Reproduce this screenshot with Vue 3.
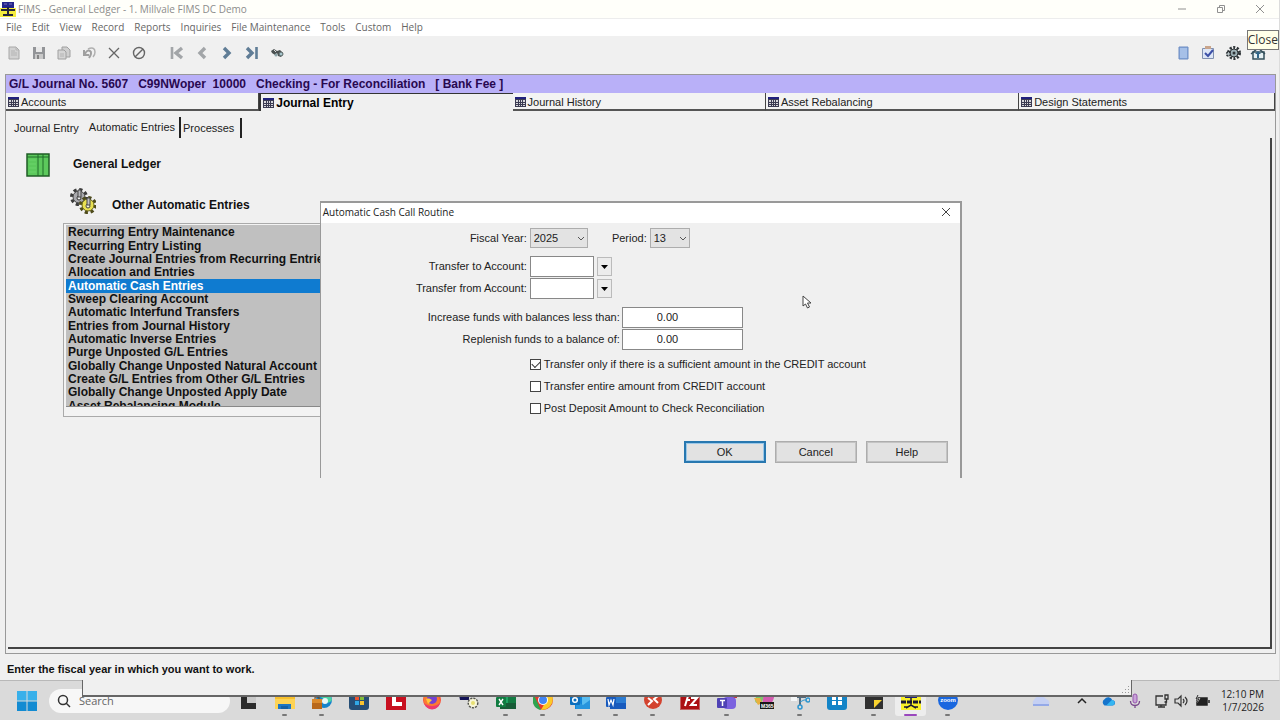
<script setup>
import { ref } from 'vue'

const menus = ['File', 'Edit', 'View', 'Record', 'Reports', 'Inquiries', 'File Maintenance', 'Tools', 'Custom', 'Help']

const leftTools = [
  { name: 'New', art: '<path d="M3 2h7l3 3v9H3z" fill="#d2d2d2" stroke="#a8a8a8"/><path d="M10 2v3h3M5 6h4M5 8h6M5 10h6" fill="none" stroke="#b4b4b4"/>' },
  { name: 'Save', art: '<path d="M2 2h12v12H2z" fill="#939598"/><path d="M5 2h6v5H5z" fill="#e9e9e9"/><path d="M4 9h8v5H4z" fill="#c9c9c9"/><path d="M6 10h2v4H6z" fill="#858585"/>' },
  { name: 'Copy', art: '<path d="M6 2h5l3 3v7H6z" fill="#cfcfcf" stroke="#a0a0a0"/><path d="M2 5h6l2 2v7H2z" fill="#d5d5d5" stroke="#a0a0a0"/><path d="M4 9h4M4 11h4" stroke="#b4b4b4"/>' },
  { name: 'Undo', art: '<path d="M3 5v5h5M4 9c1-3 3-4 5-3s1 4-1 7" fill="none" stroke="#a0a0a0" stroke-width="2"/><path d="M7 4c4-2 7-1 7 3 0 2-1 4-2 5" fill="none" stroke="#b0b0b0" stroke-width="1.500"/>' },
  { name: 'Delete', art: '<path d="M3 3l10 10M13 3L3 13" fill="none" stroke="#666" stroke-width="1.3"/>' },
  { name: 'Cancel record', art: '<circle cx="8" cy="8" r="5.500" fill="none" stroke="#666" stroke-width="1.4"/><path d="M4 12l8-8" stroke="#666" stroke-width="1.4"/>' }
]
const navTools = [
  { name: 'First', art: '<path d="M3 2v12" stroke="#a2a5a8" stroke-width="2.6"/><path d="M13 3L7 8l6 5" fill="none" stroke="#a2a5a8" stroke-width="3.4"/>' },
  { name: 'Previous', art: '<path d="M11 3L6 8l5 5" fill="none" stroke="#a2a5a8" stroke-width="3.4"/>' },
  { name: 'Next', art: '<path d="M5 3l5 5-5 5" fill="none" stroke="#607d96" stroke-width="3.4"/>' },
  { name: 'Last', art: '<path d="M3 3l5 5-5 5" fill="none" stroke="#607d96" stroke-width="3.4"/><path d="M12.500 2v12" stroke="#607d96" stroke-width="2.6"/>' },
  { name: 'Find', art: '<path d="M2 6l3-2 3 2 3-1 3 3-2 4-3-1-1-3-2 2-3-2z" fill="#4b5151"/><circle cx="12" cy="9" r="2" fill="#a7c6cd" stroke="#596565"/><circle cx="7" cy="10" r="1.5" fill="#8da5aa"/><path d="M5 5l2 2" stroke="#ddd"/>' }
]
const rightTools = [
  { name: 'Calculator', art: '<path d="M4 2h9v12H4z" fill="#88a9dc" stroke="#6d8cc2"/><path d="M5 4h7M5 6h7M5 8h7M5 10h7M5 12h7" stroke="#c4d7f3"/>' },
  { name: 'Tasks', art: '<path d="M2.500 3.500h11v10h-11z" fill="#dde6f7" stroke="#8090b0"/><path d="M5 1h6v3H5z" fill="#c9a58c"/><path d="M5 8l3 3 5-6" fill="none" stroke="#3c50a8" stroke-width="2"/>' },
  { name: 'Settings', art: '<circle cx="9" cy="8" r="5.500" fill="none" stroke="#2e3437" stroke-width="3" stroke-dasharray="2 1.500"/><circle cx="9" cy="8" r="4" fill="#9db0b5" stroke="#2e3437"/><circle cx="9" cy="8" r="1.500" fill="#2e3437"/><circle cx="3.500" cy="9" r="2" fill="#b7c3c6" stroke="#2e3437" stroke-width="1.500" stroke-dasharray="2 1"/>' },
  { name: 'Home', art: '<path d="M3 7h11v7H3z" fill="#e5f0f3" stroke="#34505c" stroke-width="1.5"/><path d="M1 9l7-6 7 6" fill="none" stroke="#34505c" stroke-width="1.5"/><path d="M8 6l3 3H9v4H7V9H5z" fill="#31678a"/>' }
]

const record = 'G/L Journal No. 5607   C99NWoper  10000   Checking - For Reconciliation   [ Bank Fee ]'
const tabs = ['Accounts', 'Journal Entry', 'Journal History', 'Asset Rebalancing', 'Design Statements']
const subTabs = ['Journal Entry', 'Automatic Entries', 'Processes']
const routines = [
  'Recurring Entry Maintenance',
  'Recurring Entry Listing',
  'Create Journal Entries from Recurring Entries',
  'Allocation and Entries',
  'Automatic Cash Entries',
  'Sweep Clearing Account',
  'Automatic Interfund Transfers',
  'Entries from Journal History',
  'Automatic Inverse Entries',
  'Purge Unposted G/L Entries',
  'Globally Change Unposted Natural Account',
  'Create G/L Entries from Other G/L Entries',
  'Globally Change Unposted Apply Date',
  'Asset Rebalancing Module'
]
const activeTab = ref('Journal Entry')
const activeRoutine = ref('Automatic Cash Entries')

const fiscalYear = ref('2025')
const period = ref('13')
const toAccount = ref('')
const fromAccount = ref('')
const lessThan = ref('0.00')
const balanceOf = ref('0.00')
const options = ref([
  { id: 'credit-only', label: 'Transfer only if there is a sufficient amount in the CREDIT account', on: true },
  { id: 'entire', label: 'Transfer entire amount from CREDIT account', on: false },
  { id: 'deposit', label: 'Post Deposit Amount to Check Reconciliation', on: false }
])

const apps = [
  { name: 'Task view', art: '<path d="M3 4h6v9h9v6H3z" fill="#2b2b2b"/><path d="M9 3h9v10H9z" fill="#c9c9c9"/>' },
  { name: 'File Explorer', run: true, art: '<path d="M0 2h8l2 2h10v15H0z" fill="#f7c02c"/><path d="M0 9h20v10H0z" fill="#fdd355"/><path d="M3 14h13v5H3z" fill="#1c76c4"/><path d="M6 16h7v3H6z" fill="#1460a4"/>' },
  { name: 'Edge Work', run: true, art: '<circle cx="12" cy="10" r="8" fill="#1583cc"/><path d="M5 5a9 9 0 0 1 15 5c-3 4-7 3-8-1z" fill="#49d3a3"/><circle cx="13" cy="11" r="3" fill="#e9f6f7"/><path d="M0 9h10v10H0z" fill="#b8681b"/><path d="M0 9h10v4H0z" fill="#db8a2b"/><path d="M3 9V7h4v2" fill="none" stroke="#724015"/>' },
  { name: 'Microsoft Store', art: '<rect width="20" height="20" rx="3" fill="#264e76"/><path d="M6 6h4v4H6z" fill="#ee5430"/><path d="M11 6h4v4h-4z" fill="#84be3b"/><path d="M6 11h4v4H6z" fill="#31a7e5"/><path d="M11 11h4v4h-4z" fill="#f9c22e"/>' },
  { name: 'Lexis', art: '<path d="M0 0h20v20H0z" fill="#c81020"/><path d="M6 3h4v9h6v4H6z" fill="#fff"/>' },
  { name: 'Firefox', art: '<circle cx="10" cy="10" r="9" fill="#f9543b"/><path d="M2 5c3 4 3-2 9 0 4 0 7 2 7 7-3 9-16 8-16-1z" fill="#fb7b32"/><circle cx="10" cy="9" r="5" fill="#7541d3"/><path d="M4 9c3-1 4 0 6 1l-4 4z" fill="#ffc739"/><path d="M2 13c4 4 12 4 16 0-2 8-13 9-16 0z" fill="#ed3a6f"/>' },
  { name: 'FIMS Tools', art: '<path d="M0 5h6l4 2v3H1z" fill="#141457"/><circle cx="14" cy="13" r="4.500" fill="#f8f6d9" stroke="#55564f" stroke-width="2" stroke-dasharray="2 1"/><circle cx="14" cy="13" r="4" fill="#f8f6d9"/><circle cx="14" cy="13" r="2" fill="#e8df72"/>' },
  { name: 'Excel', run: true, art: '<rect x="4" y="1" width="16" height="18" rx="1" fill="#20a464"/><path d="M12 7h8v6h-8z" fill="#137b42"/><path d="M4 13h16v6H4z" fill="#185c37"/><rect y="7" width="10" height="10" rx="1" fill="#107c41"/><path d="M3 9l4 6M7 9l-4 6" stroke="#fff" stroke-width="1.4"/>' },
  { name: 'Chrome', run: true, art: '<circle cx="10" cy="10" r="10" fill="#e33b2e"/><path d="M1 5l7 15C0 19-2 10 1 5z" fill="#2ea44f"/><path d="M19 5c3 8-3 15-11 15l5-9-1-6z" fill="#fbc927"/><circle cx="10" cy="10" r="5" fill="#fff"/><circle cx="10" cy="10" r="4" fill="#4285f4"/>' },
  { name: 'Outlook', run: true, art: '<path d="M5 1h14v18H5z" fill="#1285d8"/><path d="M12 6h8v12h-8z" fill="#59bdf0"/><path d="M6 11l7 4 7-5v9H6z" fill="#2795dd"/><rect y="5" width="10" height="10" rx="1" fill="#0d6fbd"/><circle cx="5" cy="10" r="2.3" fill="none" stroke="#fff" stroke-width="1.5"/>' },
  { name: 'Word', run: true, art: '<rect x="4" y="1" width="16" height="18" rx="1" fill="#41a5ee"/><path d="M4 7h16v6H4z" fill="#2b7cd3"/><path d="M4 13h16v6H4z" fill="#185abd"/><rect y="7" width="10" height="10" rx="1" fill="#185abd"/><path d="M2 9l1 6 2-5 2 5 1-6" fill="none" stroke="#fff" stroke-width="1.2"/>' },
  { name: 'Remote Desktop', run: true, art: '<circle cx="10" cy="10" r="9" fill="#d3432f"/><path d="M5 8l4 3-4 4M15 6l-4 3 4 4" fill="none" stroke="#fff" stroke-width="2"/>' },
  { name: 'FileZilla', art: '<path d="M0 0h20v20H0z" fill="#ac1014"/><path d="M5 16L8 6h5M6 10h4M11 8h6l-6 7h6" fill="none" stroke="#fff" stroke-width="2"/><path d="M.5.5h19v19H.5z" fill="none" stroke="#d9b4b4" stroke-dasharray="1 1"/>' },
  { name: 'Teams', run: true, art: '<circle cx="14" cy="4" r="4" fill="#5059c9"/><path d="M13 5h7v3h-5z" fill="#c73639"/><rect x="6" y="7" width="13" height="12" rx="4" fill="#7b62df"/><rect x="0" y="8" width="10" height="10" rx="1" fill="#4f42b5"/><path d="M3 10.500h5M5.500 10v6" stroke="#fff" stroke-width="1.5"/>' },
  { name: 'Copilot M365', art: '<path d="M1 10C4-2 9 0 12 2l-4 10c-3 2-7 2-7-2z" fill="#7dc86b"/><path d="M10 3h10c1 5-2 12-7 12H8z" fill="#d35bb0"/><path d="M0 8h6l2 5-4 2z" fill="#e8b13f"/><path d="M6 12h14v7H6z" fill="#171717"/><text x="7" y="17.500" font-size="5" font-weight="bold" fill="#fff">M365</text>' },
  { name: 'Snipping Tool', run: true, art: '<path d="M1 7h15M10 2v13" stroke="#546d80" stroke-width="2"/><path d="M1 7h6v4H1z" fill="#f4f6f7"/><circle cx="18" cy="10" r="2" fill="none" stroke="#2f96cf" stroke-width="1.5"/><circle cx="10" cy="17" r="2" fill="none" stroke="#2f96cf" stroke-width="1.5"/><path d="M10 12l4-2h3" fill="none" stroke="#2f96cf"/>' },
  { name: 'Microsoft Windows App', art: '<rect width="20" height="20" rx="3" fill="#1384c7"/><path d="M5 6h4v4H5zM11 6h4v4h-4zM5 11h4v4H5zM11 11h4v4h-4z" fill="#fff"/>' },
  { name: 'Sticky Notes', run: true, art: '<path d="M1 1h18v18H1z" fill="#303030"/><path d="M10 18v-8h8z" fill="#f9d32e"/>' },
  { name: 'FIMS', run: true, on: true, art: '<path d="M0 1h20v19H0z" fill="#f8ef28"/><path d="M4 3h12v5H4z" fill="#1d207a"/><path d="M0 12h20" stroke="#171733" stroke-width="3" stroke-dasharray="5 1"/><path d="M10 8v8M3 17h4M13 17h4M5 18l5-3 5 3" fill="none" stroke="#171733" stroke-width="1.500"/>' },
  { name: 'Zoom', run: true, art: '<circle cx="10" cy="10" r="10" fill="#1967df"/><text x="10" y="12" text-anchor="middle" font-size="6" font-weight="bold" fill="#fff">zoom</text>' }
]
</script>

<template>
  <div class="desktop">
    <div class="window">
      <header class="titlebar">
        <svg class="logo" viewBox="0 0 16 16" aria-hidden="true">
          <path d="M0 7h16v9H0z" fill="#f4ec3e" /><path d="M2 1h12v6H2z" fill="#23238c" />
          <path d="M1 9h14" stroke="#24243c" stroke-width="2" stroke-dasharray="6 2" />
          <path d="M8 6v7M3 14h10" stroke="#24243c" stroke-width="2" /><path d="M4 3h3M9 3h3" stroke="#7f75b8" />
        </svg>
        <span class="title">FIMS - General Ledger - 1. Millvale FIMS DC Demo</span>
        <button class="caption-btn" aria-label="Minimize"><svg viewBox="0 0 10 10"><path d="M1 5h8" /></svg></button>
        <button class="caption-btn" aria-label="Restore"><svg viewBox="0 0 10 10"><path d="M1.500 3.500h5v5h-5zM3.500 3V1.500h5v5H7" /></svg></button>
        <button class="caption-btn" aria-label="Close window"><svg viewBox="0 0 10 10"><path d="M1 1l8 8M9 1L1 9" /></svg></button>
      </header>

      <nav class="menubar">
        <button v-for="m in menus" :key="m">{{ m }}</button>
      </nav>

      <div class="toolbar">
        <div class="tools">
          <button v-for="t in leftTools" :key="t.name" :aria-label="t.name"><svg viewBox="0 0 16 16" v-html="t.art" /></button>
        </div>
        <div class="tools">
          <button v-for="t in navTools" :key="t.name" :aria-label="t.name"><svg viewBox="0 0 16 16" v-html="t.art" /></button>
        </div>
        <div class="tools far">
          <button v-for="t in rightTools" :key="t.name" :aria-label="t.name"><svg viewBox="0 0 16 16" v-html="t.art" /></button>
        </div>
        <span class="tooltip">Close</span>
      </div>

      <main class="frame">
        <h1 class="record">{{ record }}</h1>
        <div class="tabs">
          <button v-for="t in tabs" :key="t" class="tab" :class="{ active: t === activeTab }" @click="activeTab = t">
            <svg viewBox="0 0 11 10" aria-hidden="true">
              <path d="M0 0h11v10H0z" fill="#3b3b52" /><path d="M0 0h11v2H0z" fill="#20207c" />
              <path d="M1 3h2v2H1zM4 3h1v2H4zM6 3h1v2H6zM8 3h2v2H8zM1 6h2v1H1zM4 6h1v1H4zM6 6h1v1H6zM8 6h2v1H8zM1 8h2v1H1zM4 8h1v1H4zM6 8h1v1H6zM8 8h2v1H8z" fill="#d8d8dc" />
            </svg>
            {{ t }}
          </button>
        </div>
        <div class="subtabs">
          <button v-for="(t, i) in subTabs" :key="t" :class="{ current: i === 1 }">{{ t }}</button>
        </div>

        <section class="panel">
          <div class="heading">
            <svg class="book" viewBox="0 0 24 24" aria-hidden="true">
              <path d="M1 1h22v22H1z" fill="#5cc95c" stroke="#1f5c26" stroke-width="1.500" />
              <path d="M1 4h22M12 1v22M17 1v22" stroke="#1f6c28" fill="none" />
              <path d="M3 7h7M3 11h7M3 15h7M3 19h7" stroke="#6ad46a" />
            </svg>
            <h2>General Ledger</h2>
          </div>
          <div class="heading nested">
            <svg class="gears" viewBox="0 0 26 26" aria-hidden="true">
              <circle cx="9" cy="9" r="7" fill="none" stroke="#3c3c3c" stroke-width="4" stroke-dasharray="3 2.500" />
              <circle cx="9" cy="9" r="6" fill="#a9a9ad" stroke="#4a4a4a" /><circle cx="9" cy="10" r="2" fill="#eee" stroke="#333" /><path d="M8 2h3v7H8z" fill="#b9b9bd" stroke="#444" />
              <circle cx="18" cy="17" r="7" fill="none" stroke="#4e4b1b" stroke-width="4" stroke-dasharray="3 2.500" />
              <circle cx="18" cy="17" r="6" fill="#e9e151" stroke="#6a661f" /><circle cx="18" cy="18" r="2" fill="#f7f6dc" stroke="#444" /><path d="M17 10h3v7h-3z" fill="#c2c2c2" stroke="#444" />
            </svg>
            <h2>Other Automatic Entries</h2>
          </div>
          <div class="listbox">
            <div class="list-view">
              <ul>
                <li v-for="r in routines" :key="r">
                  <button :class="{ selected: r === activeRoutine }" @click="activeRoutine = r">{{ r }}</button>
                </li>
              </ul>
            </div>
          </div>
        </section>
      </main>

      <footer class="status">Enter the fiscal year in which you want to work.</footer>

      <form class="dialog" role="dialog" aria-labelledby="dlg-title" @submit.prevent>
        <div class="dialog-title">
          <span id="dlg-title">Automatic Cash Call Routine</span>
          <button type="button" aria-label="Close dialog"><svg viewBox="0 0 10 10"><path d="M1 1l8 8M9 1L1 9" /></svg></button>
        </div>
        <div class="dialog-body">
          <div class="row">
            <label for="year">Fiscal Year:</label>
            <span class="select year">
              <select id="year" v-model="fiscalYear"><option>2025</option></select>
              <svg viewBox="0 0 8 6" aria-hidden="true"><path d="M1 1l3 3 3-3" /></svg>
            </span>
            <label class="inline" for="period">Period:</label>
            <span class="select period">
              <select id="period" v-model="period"><option>13</option></select>
              <svg viewBox="0 0 8 6" aria-hidden="true"><path d="M1 1l3 3 3-3" /></svg>
            </span>
          </div>
          <div class="pair">
            <div class="row">
              <label for="to">Transfer to Account:</label>
              <input id="to" v-model="toAccount" class="account" type="text" />
              <button type="button" class="lookup" aria-label="Look up transfer to account"><svg viewBox="0 0 7 4"><path d="M0 0h7L3.500 4z" /></svg></button>
            </div>
            <div class="row">
              <label for="from">Transfer from Account:</label>
              <input id="from" v-model="fromAccount" class="account" type="text" />
              <button type="button" class="lookup" aria-label="Look up transfer from account"><svg viewBox="0 0 7 4"><path d="M0 0h7L3.500 4z" /></svg></button>
            </div>
          </div>
          <div class="pair">
            <div class="row wide">
              <label for="less">Increase funds with balances less than:</label>
              <input id="less" v-model="lessThan" class="amount" type="text" />
            </div>
            <div class="row wide">
              <label for="bal">Replenish funds to a balance of:</label>
              <input id="bal" v-model="balanceOf" class="amount" type="text" />
            </div>
          </div>
          <div class="checks">
            <div v-for="o in options" :key="o.id" class="check">
              <input :id="o.id" v-model="o.on" type="checkbox" />
              <label :for="o.id">{{ o.label }}</label>
            </div>
          </div>
          <div class="actions">
            <button type="submit" class="primary">OK</button>
            <button type="button">Cancel</button>
            <button type="button">Help</button>
          </div>
        </div>
        <svg class="cursor" viewBox="0 0 10 14" aria-hidden="true"><path d="M1 1v10l2.500-2 2 4 2-1-2-4H9z" fill="#fff" stroke="#444" /></svg>
      </form>
    </div>

    <div class="taskbar">
      <div class="start-area">
        <button class="start" aria-label="Start">
          <svg viewBox="0 0 20 20"><path d="M0 0h9.500v9.500H0zM10.500 0H20v9.500h-9.500z" fill="#38b0ea" /><path d="M0 10.500h9.500V20H0zM10.500 10.500H20V20h-9.500z" fill="#128bd2" /></svg>
        </button>
        <label class="search">
          <svg viewBox="0 0 14 14" aria-hidden="true"><circle cx="6" cy="6" r="4.500" /><path d="M9 9l4 4" /></svg>
          <input type="text" placeholder="Search" aria-label="Search" />
        </label>
      </div>
      <div class="apps">
        <button v-for="a in apps" :key="a.name" :class="{ run: a.run, on: a.on }" :aria-label="a.name">
          <svg viewBox="0 0 20 20" v-html="a.art" />
        </button>
      </div>
      <div class="tray">
        <svg class="cloud" viewBox="0 0 22 12"><path d="M4 11a4 4 0 0 1 0-6 7 7 0 0 1 12-1 4 4 0 0 1 2 7z" fill="#c5d0f3" /><path d="M3 10h16" stroke="#94a9e8" stroke-width="2" /></svg>
        <svg class="chev" viewBox="0 0 16 16"><path d="M4 10l4-4 4 4" fill="none" stroke="#222" stroke-width="1.500" /></svg>
        <svg class="drive" viewBox="0 0 16 12"><path d="M4 11a4 4 0 0 1 0-7 5 5 0 0 1 9 1 3 3 0 0 1 0 6z" fill="#1574cc" /><path d="M6 11l6-6a3 3 0 0 1 1 6z" fill="#35b6f2" /></svg>
        <svg class="mic" viewBox="0 0 16 16"><rect x="6" y="1" width="4" height="9" rx="2" fill="#c9a2d9" stroke="#9558ad" /><path d="M3.500 8c0 6 9 6 9 0M8 12v3" fill="none" stroke="#79488d" stroke-width="1.300" /></svg>
        <svg class="net" viewBox="0 0 16 16"><path d="M9 3H2v9h10V8M4 14h7M7 12v2M11 2h3v4h-3zM12.500 6v3h-2" fill="none" stroke="#333" stroke-width="1.300" /></svg>
        <svg class="vol" viewBox="0 0 16 16"><path d="M2 6h3l3-3v10L5 10H2zM10 6q2 2 0 4M12 4q4 4 0 8" fill="none" stroke="#333" stroke-width="1.200" /></svg>
        <svg class="bat" viewBox="0 0 16 16"><path d="M3 5h10v7H3z" fill="#222" stroke="#222" stroke-width="1.500" /><path d="M15 7v3" stroke="#222" stroke-width="1.500" /><path d="M4 2L2 6h3L3 9" fill="none" stroke="#eee" stroke-width="1.500" /><path d="M4 2L2 6h3L3 9" fill="none" stroke="#222" /></svg>
        <div class="clock"><span>12:10 PM</span><span>1/7/2026</span></div>
      </div>
      <div class="overhang"><svg viewBox="0 0 8 8" aria-hidden="true"><path d="M6 0h1v1H6zM6 3h1v1H6zM3 3h1v1H3zM6 6h1v1H6zM3 6h1v1H3zM0 6h1v1H0z" fill="#999" /></svg></div>
    </div>
  </div>
</template>

<style>
body { background: #d9d9d9; }
</style>

<style scoped>
.desktop {
  --ui: "Open Sans", "Noto Sans", sans-serif;
  --sys: "Liberation Sans", Arial, sans-serif;
  display: flex;
  flex-direction: column;
  min-height: 100vh;
  font: 11px/14px var(--sys);
  color: #222;
}
.desktop * { box-sizing: border-box; }
button, input, select { font: inherit; color: inherit; margin: 0; padding: 0; border: 0; background: none; border-radius: 0; }
button { display: flex; align-items: center; justify-content: center; }
h1, h2, ul { margin: 0; padding: 0; list-style: none; font-size: 12px; line-height: 14px; }
svg { display: block; flex: none; }

.window { position: relative; flex: 1; display: flex; flex-direction: column; background: #f0f0f0; border-right: 1px solid #dcdcdc; border-bottom: 1px solid #b8b8b8; }
.titlebar { display: flex; align-items: center; height: 19px; background: #fffffa; font: 10px/14px var(--ui); color: #8c8c8c; border-bottom: 1px solid #ededed; }
.logo { width: 16px; height: 16px; }
.title { flex: 1; padding-left: 2px; }
.caption-btn { width: 39px; height: 18px; }
.caption-btn svg { width: 10px; height: 10px; }
.caption-btn path { fill: none; stroke: #909090; }
.menubar { display: flex; gap: 10px; height: 17px; padding-left: 6px; background: #fff; font: 10px/17px var(--ui); color: #666; }

.toolbar { position: relative; display: flex; align-items: center; gap: 13px; height: 38px; padding: 0 9px 4px 1px; }
.tools { display: flex; }
.tools button { width: 25px; height: 20px; }
.tools svg { width: 16px; height: 16px; }
.far { margin-left: auto; }
.tooltip { position: absolute; right: 0; top: -6px; padding: 0; background: #ffffe8; border: 1px solid #777; font: 12px/18px var(--ui); color: #333; }

.frame { flex: 1; display: flex; flex-direction: column; margin: 0 3px 0 5px; border: 1px solid #999; }
.record { height: 18px; padding-left: 3px; background: #b9b0f8; color: #280850; line-height: 18px; white-space: pre; overflow: hidden; }
.tabs { display: grid; grid-template-columns: repeat(4, 1fr) 1.01fr; height: 18px; }
.tab { justify-content: flex-start; gap: 2px; padding: 1px 0 0 2px; background: #f3f3f3; border-right: 1px solid #444; border-bottom: 2px solid #555; }
.tab svg { width: 11px; height: 10px; }
.tab.active { padding-bottom: 1px; font-size: 12px; font-weight: bold; color: #000; background: none; border: solid #333; border-width: 1px 0 0 2px; }
.subtabs { display: flex; align-items: flex-end; height: 27px; padding-left: 4px; }
.subtabs button { height: 20px; padding: 0 4px; border-right: 1px solid transparent; }
.subtabs .current { height: 21px; padding: 0 4px 2px 5px; }
.subtabs .current, .subtabs button:last-child { border-right-color: #222; border-right-width: 2px; }
.subtabs button:last-child { padding: 0 6px 0 2px; }
.panel { flex: 1; margin: 0 3px 4px 2px; padding: 14px 0 12px 18px; border: solid #444; border-width: 0 2px 2px 0; }
.heading { display: flex; align-items: center; height: 26px; gap: 23px; color: #111; }
.heading h2 { padding-bottom: 2px; }
.book { width: 24px; height: 24px; }
.nested { margin: 9px 0 8px 44px; height: 28px; gap: 16px; }
.nested h2 { padding: 8px 0 0; }
.gears { width: 26px; height: 26px; }
.listbox { width: 400px; margin-left: 37px; padding: 1px 1px 9px 2px; border: 1px solid #aaa; background: #f3f3f3; }
.list-view { height: 182px; padding-top: 1px; overflow: hidden; background: #c0c0c0; border-bottom: 1px solid #888; }
.list-view ul { display: grid; grid-auto-rows: 1fr; height: 187px; }
.list-view button { width: 100%; height: 100%; justify-content: flex-start; padding-left: 2px; font-weight: bold; font-size: 12px; line-height: 13px; color: #111; white-space: nowrap; }
.list-view .selected { background: #0f7bd0; color: #fff; }
.status { height: 26px; padding: 4px 7px 0; line-height: 22px; font-weight: bold; color: #111; }

.dialog { position: absolute; left: 25%; top: 201px; width: 642px; background: #f0f0f0; border: solid #999; border-width: 2px 2px 0 1px; }
.dialog-title { display: flex; align-items: center; justify-content: space-between; height: 20px; padding: 0 9px 2px 2px; background: #fff; font: 10px/14px var(--ui); }
.dialog-title svg { width: 10px; height: 10px; }
.dialog-title path { fill: none; stroke: #444; }
.dialog-body { display: flex; flex-direction: column; gap: 8px; padding: 5px 12px 15px 0; }
.row { display: flex; align-items: center; gap: 3px; }
.row > label { width: 206px; text-align: right; }
.row > .inline { width: 56px; }
.row.wide { gap: 2px; }
.row.wide > label { width: 299px; }
.pair { display: flex; flex-direction: column; gap: 1px; }
.pair label { padding-bottom: 2px; }
.select { position: relative; height: 20px; }
.year { width: 58px; }
.period { width: 40px; }
.select select { appearance: none; width: 100%; height: 100%; padding-left: 3px; background: #e3e3e3; border: 1px solid #adadad; }
.select svg { position: absolute; right: 3px; top: 8px; width: 8px; height: 6px; pointer-events: none; }
.select path { fill: none; stroke: #555; }
.account, .amount { height: 21px; background: #fff; border: 1px solid #888; }
.account { width: 64px; padding: 0 3px; }
.amount { width: 121px; padding: 0 0 2px 34px; }
.lookup { width: 15px; height: 19px; background: #ececec; border: 1px solid #bbb; }
.lookup svg { width: 7px; height: 4px; }
.checks { margin-top: -5px; padding-left: 209px; }
.check { display: flex; align-items: center; gap: 3px; height: 22px; }
.check input { appearance: none; position: relative; width: 11px; height: 11px; background: #fff; border: 1px solid #444; }
.check input:checked::after { content: ""; position: absolute; left: 1px; top: 1px; width: 7px; height: 4px; border: solid #333; border-width: 0 0 1px 1px; transform: rotate(-45deg); }
.actions { display: flex; justify-content: flex-end; gap: 9px; margin-top: 14px; }
.actions button { width: 82px; height: 22px; background: #e2e2e2; border: 1px solid #adadad; outline: 1px solid #c4c4c4; outline-offset: -2px; }
.actions .primary { border: 2px solid #2878b0; outline-color: #9cc8e8; outline-offset: -3px; }
.cursor { position: absolute; left: 481px; top: 92px; width: 10px; height: 14px; }

.taskbar { position: relative; display: flex; height: 39px; background: #dadada; font: 11px/14px var(--ui); }
.start-area { display: flex; align-items: center; width: 230px; padding-left: 17px; gap: 12px; }
.start svg { width: 20px; height: 20px; }
.search { flex: 1; display: flex; align-items: center; gap: 8px; height: 24px; padding-left: 8px; border-radius: 12px; background: #f7f7f7; }
.search svg { width: 14px; height: 14px; fill: none; stroke: #333; stroke-width: 1.5; }
.search input { flex: 1; min-width: 0; height: 18px; }
.search input::placeholder { color: #666; opacity: 1; }
.apps { flex: 1; display: grid; grid-template-columns: repeat(20, 1fr); font-family: var(--sys); }
.apps button { position: relative; padding-bottom: 2px; }
.apps button svg { width: 20px; height: 20px; }
.apps .on::before { content: ""; position: absolute; left: 3px; right: 3px; top: 4px; bottom: 4px; border-radius: 3px; background: #ededed; }
.apps .on svg { position: relative; }
.apps .run::after { content: ""; position: absolute; left: 50%; bottom: 4px; width: 5px; height: 2px; margin-left: -3px; border-radius: 1px; background: #777; }
.apps .on::after { width: 13px; margin-left: -7px; background: #9a48bd; }
.tray { display: flex; align-items: center; justify-content: flex-end; width: 314px; padding-right: 16px; }
.tray svg { width: 16px; height: 16px; }
.tray .cloud { width: 22px; height: 12px; margin-right: 22px; }
.tray .chev { margin-right: 11px; }
.tray .drive { height: 12px; width: 14px; margin-right: 12px; }
.tray .mic { margin-right: 11px; }
.tray .vol { margin: 0 5px 0 3px; }
.clock { display: flex; flex-direction: column; align-items: flex-end; width: 54px; font-size: 10px; line-height: 13px; }
.overhang { position: absolute; left: 82px; right: 148px; top: -1px; height: 17px; display: flex; align-items: flex-end; justify-content: flex-end; background: #f0f0f0; border: solid #666; border-width: 0 1px 2px 1px; }
.overhang svg { width: 8px; height: 8px; margin: 1px; }
</style>
